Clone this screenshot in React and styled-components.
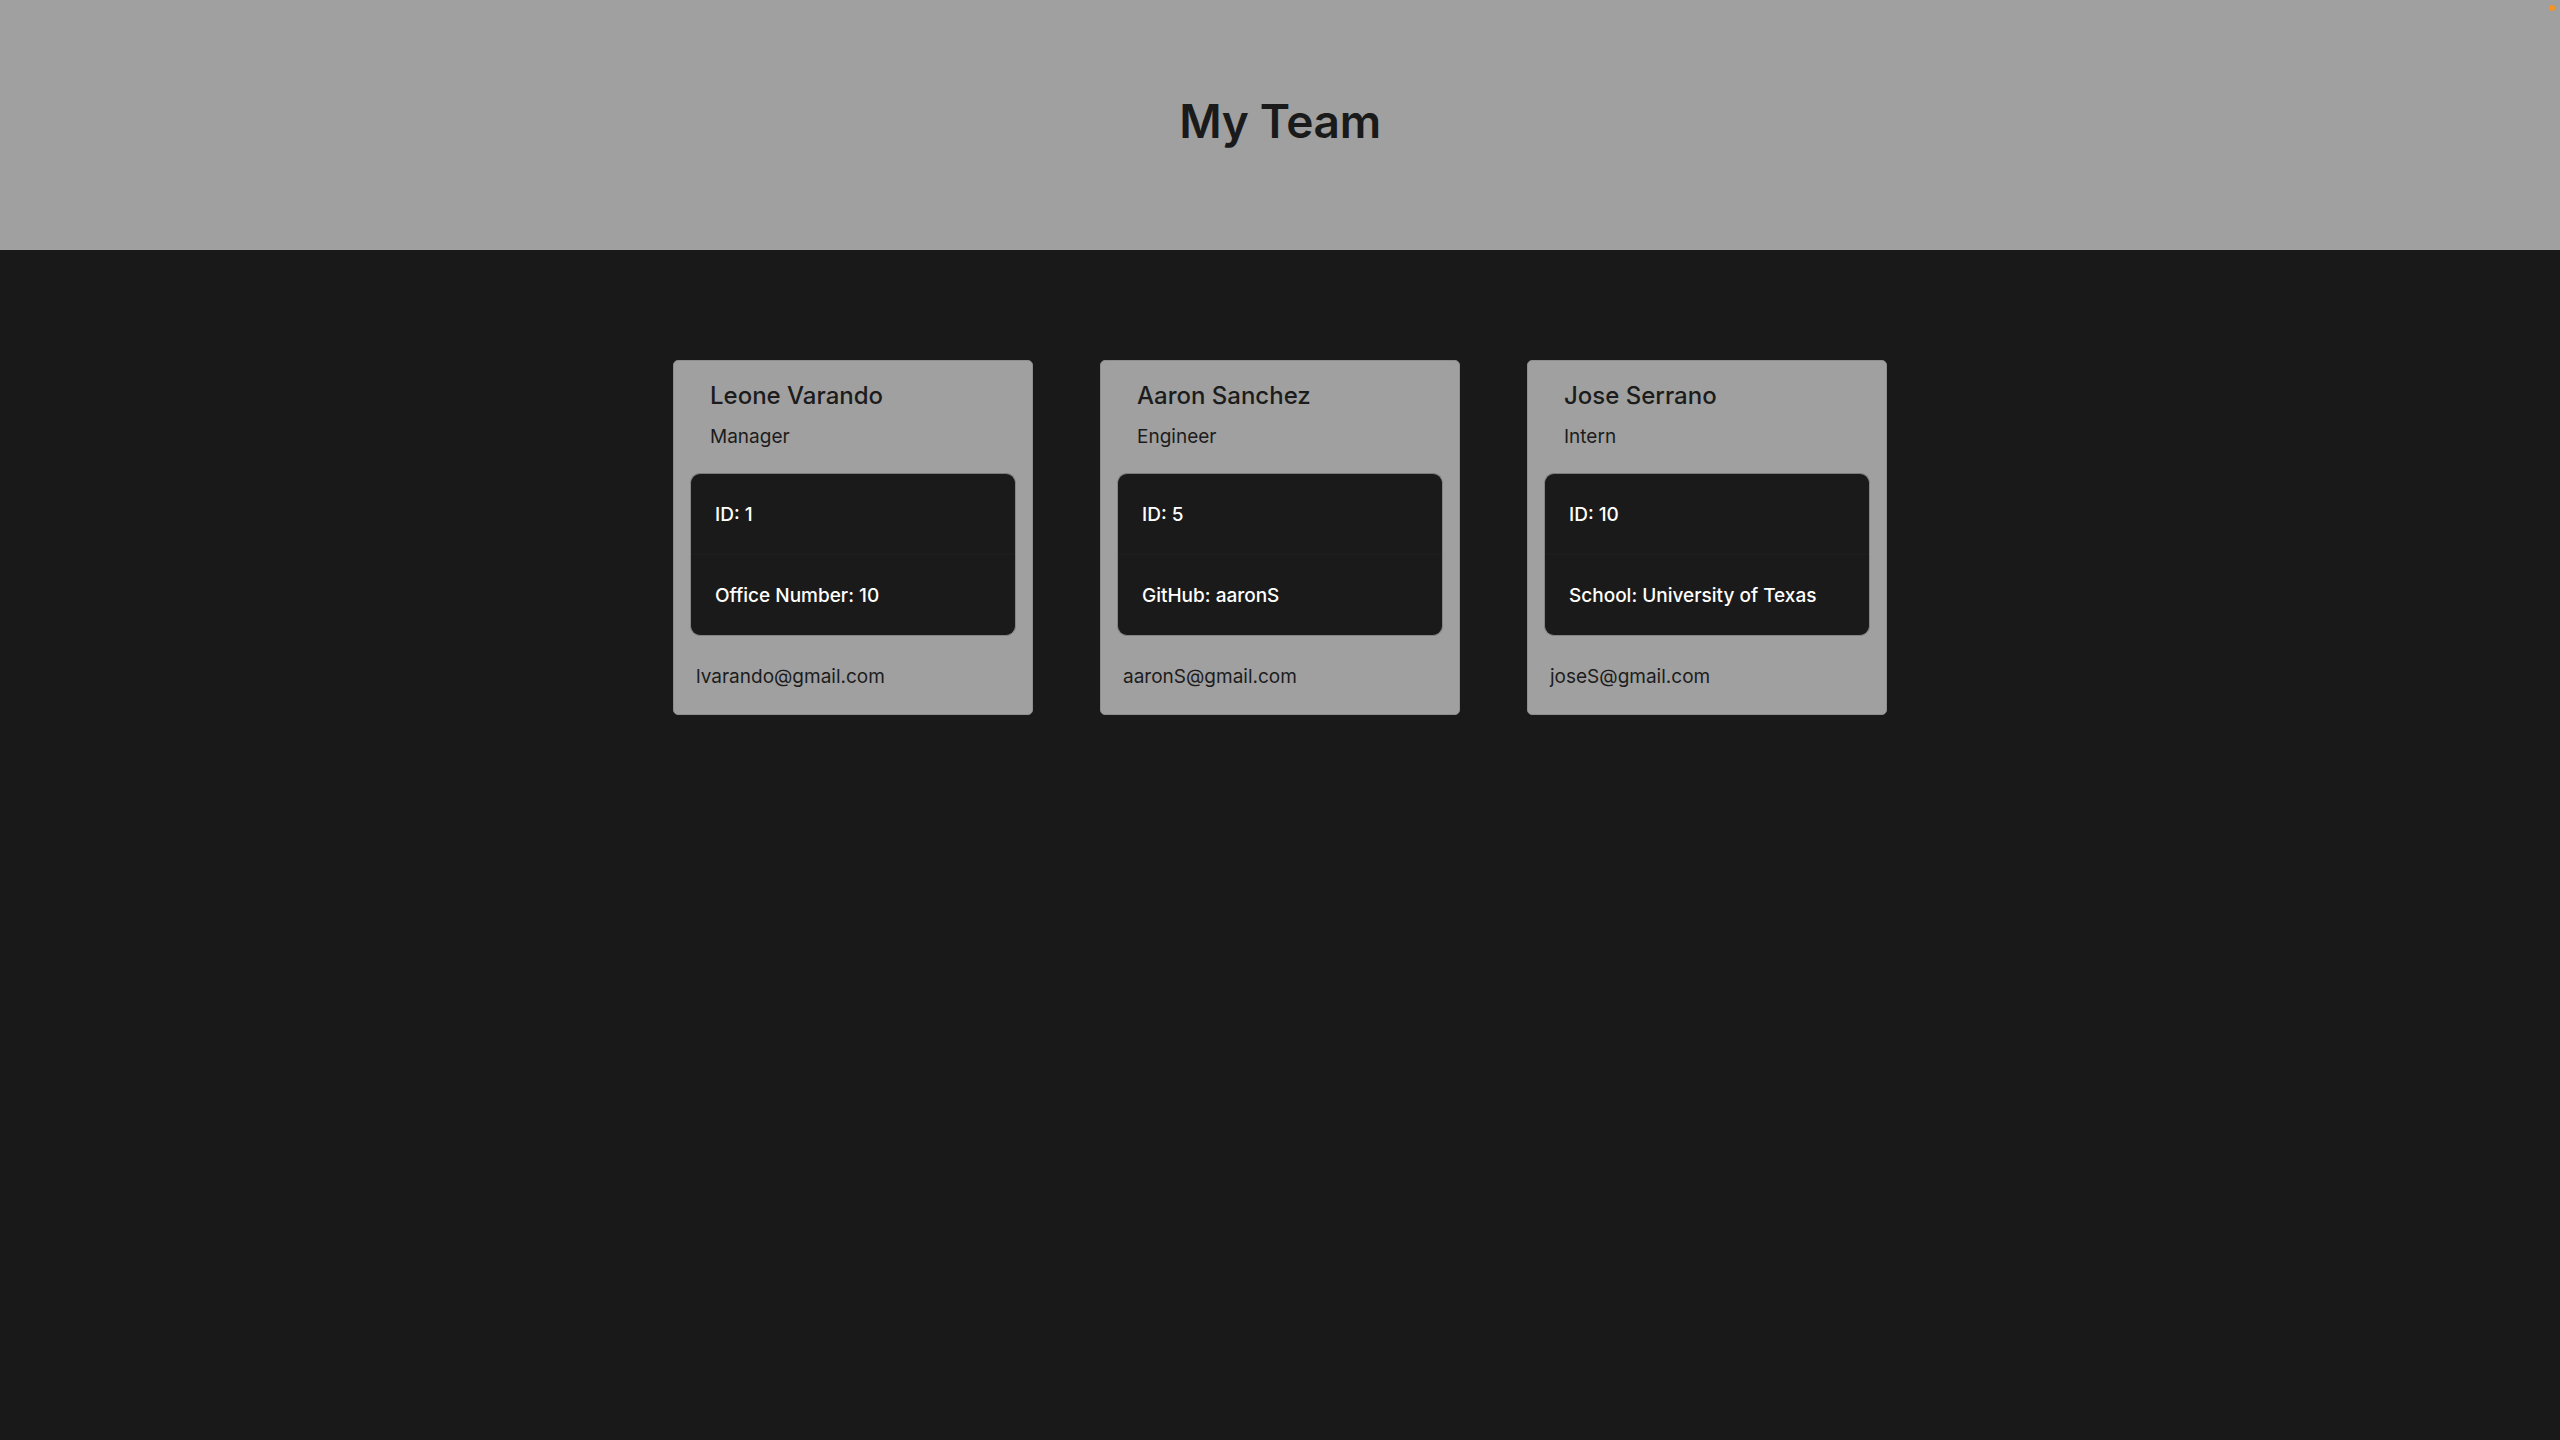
import React from 'react';
import styled, { createGlobalStyle } from 'styled-components';

const GlobalStyle = createGlobalStyle`
  html, body {
    margin: 0;
    padding: 0;
    background: #191919;
    font-family: Inter, "Noto Sans", "Liberation Sans", sans-serif;
  }
`;

const Page = styled.div`
  min-height: 100vh;
  background: #191919;
  position: relative;
`;

const Header = styled.header`
  height: 250px;
  background: #a0a0a0;
  display: flex;
  align-items: center;
  justify-content: center;
  padding-bottom: 8px;
  box-sizing: border-box;
`;

const Title = styled.h1`
  margin: 0;
  font-size: 46px;
  font-weight: 600;
  color: #1a1a1a;
  letter-spacing: -0.3px;
`;

const Dot = styled.span`
  position: absolute;
  top: 5px;
  right: 5px;
  width: 6px;
  height: 6px;
  border-radius: 50%;
  background: #f7931e;
`;

const CardRow = styled.main`
  display: flex;
  justify-content: center;
  gap: 67px;
  padding-top: 110px;
`;

const Card = styled.section`
  width: 360px;
  height: 355px;
  box-sizing: border-box;
  background: #a0a0a0;
  border: 1px solid #8e8e8e;
  border-radius: 5px;
  padding: 17px 16px 0;
  display: flex;
  flex-direction: column;
`;

const Name = styled.h2`
  margin: 0 0 0 20px;
  font-size: 24px;
  font-weight: 500;
  color: #1c1c1c;
  line-height: 36px;
`;

const Role = styled.div`
  margin: 10px 0 0 20px;
  font-size: 19px;
  color: #1c1c1c;
  line-height: 26px;
`;

const InfoList = styled.ul`
  list-style: none;
  margin: 23px 0 0;
  padding: 0;
  background: #1a1a1a;
  border: 1px solid #858585;
  border-top-color: #7a7a7a;
  border-radius: 10px;
  overflow: hidden;
`;

const InfoItem = styled.li`
  height: 80px;
  display: flex;
  align-items: center;
  padding: 0 24px;
  color: #ffffff;
  font-size: 19px;
  font-weight: 500;
  & + & {
    border-top: 1px solid #1e1e1e;
  }
`;

const Email = styled.div`
  margin: 29px 0 0 6px;
  font-size: 19px;
  color: #1c1c1c;
`;

const team = [
  { name: 'Leone Varando', role: 'Manager', id: 1, extra: 'Office Number: 10', email: 'lvarando@gmail.com' },
  { name: 'Aaron Sanchez', role: 'Engineer', id: 5, extra: 'GitHub: aaronS', email: 'aaronS@gmail.com' },
  { name: 'Jose Serrano', role: 'Intern', id: 10, extra: 'School: University of Texas', email: 'joseS@gmail.com' },
];

const App = () => {
  return (
    <Page>
      <GlobalStyle />
      <Header>
        <Title>My Team</Title>
      </Header>
      <Dot />
      <CardRow>
        {team.map((m) => (
          <Card key={m.id}>
            <Name>{m.name}</Name>
            <Role>{m.role}</Role>
            <InfoList>
              <InfoItem>ID: {m.id}</InfoItem>
              <InfoItem>{m.extra}</InfoItem>
            </InfoList>
            <Email>{m.email}</Email>
          </Card>
        ))}
      </CardRow>
    </Page>
  );
};

export default App;
